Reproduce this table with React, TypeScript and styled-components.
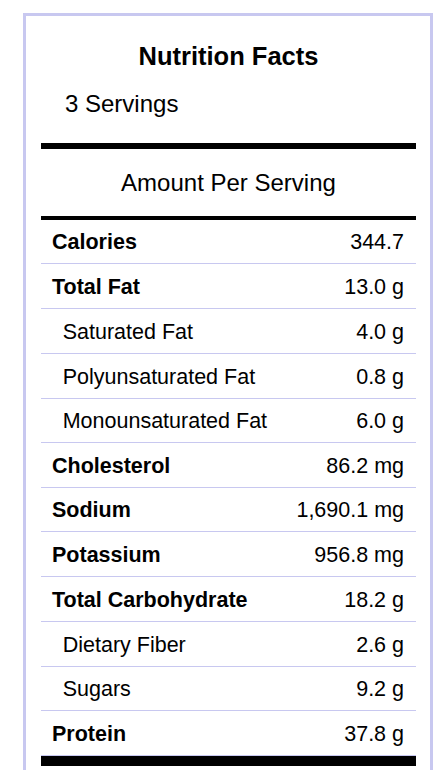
import React from 'react';
import styled, { createGlobalStyle } from 'styled-components';

const GlobalStyle = createGlobalStyle`
    html, body {
        margin: 0;
        padding: 0;
        background: #fff;
    }
    body {
        font-family: "Liberation Sans", Arial, sans-serif;
        color: #000;
    }
`;

const Page = styled.div`
    padding: 13px 0 0 23px;
`;

const Panel = styled.div`
    width: 410px;
    border: 3px solid #c8c8f0;
    padding: 0 14px 20px 15px;
    box-sizing: border-box;
`;

const Title = styled.h2`
    margin: 0;
    padding-top: 26px;
    font-size: 25.5px;
    line-height: 28px;
    font-weight: bold;
    text-align: center;
`;

const Servings = styled.div`
    margin-top: 20px;
    padding-left: 24px;
    font-size: 24px;
    line-height: 27px;
`;

const Rule = styled.div<{ $weight: number; $gap?: number }>`
    height: ${props => props.$weight}px;
    background: #000;
    margin-top: ${props => props.$gap ?? 0}px;
`;

const AmountHeader = styled.div`
    margin: 20px 0;
    font-size: 24px;
    line-height: 27px;
    text-align: center;
`;

const Row = styled.div<{ $sub?: boolean; $tight?: boolean }>`
    display: flex;
    justify-content: space-between;
    align-items: center;
    height: ${props => props.$tight ? 43 : 44}px;
    padding: 0 12px 0 ${props => props.$sub ? '21.7px' : '11px'};
    box-sizing: border-box;
    border-bottom: 1px solid #c8c8f0;
    box-sizing: content-box;
    font-size: 21.5px;
    line-height: 24px;
`;

const Label = styled.span<{ $bold?: boolean }>`
    font-weight: ${props => props.$bold ? 'bold' : 'normal'};
    padding-top: 1px;
`;

const Value = styled.span`
    text-align: right;
    padding-top: 1px;
`;

type Nutrient = {
    name: string;
    amount: string;
    sub?: boolean;
    tight?: boolean;
};

const nutrients: Nutrient[] = [
    { name: 'Calories', amount: '344.7', tight: true },
    { name: 'Total Fat', amount: '13.0 g' },
    { name: 'Saturated Fat', amount: '4.0 g', sub: true },
    { name: 'Polyunsaturated Fat', amount: '0.8 g', sub: true },
    { name: 'Monounsaturated Fat', amount: '6.0 g', sub: true, tight: true },
    { name: 'Cholesterol', amount: '86.2 mg' },
    { name: 'Sodium', amount: '1,690.1 mg', tight: true },
    { name: 'Potassium', amount: '956.8 mg' },
    { name: 'Total Carbohydrate', amount: '18.2 g' },
    { name: 'Dietary Fiber', amount: '2.6 g', sub: true },
    { name: 'Sugars', amount: '9.2 g', sub: true, tight: true },
    { name: 'Protein', amount: '37.8 g' },
];

export default function App() {
    return (
        <Page>
            <GlobalStyle />
            <Panel>
                <Title>Nutrition Facts</Title>
                <Servings>3 Servings</Servings>
                <Rule $weight={6} $gap={26} />
                <AmountHeader>Amount Per Serving</AmountHeader>
                <Rule $weight={4} />
                {nutrients.map(item => (
                    <Row key={item.name} $sub={item.sub} $tight={item.tight}>
                        <Label $bold={!item.sub}>{item.name}</Label>
                        <Value>{item.amount}</Value>
                    </Row>
                ))}
                <Rule $weight={10} />
            </Panel>
        </Page>
    );
}
